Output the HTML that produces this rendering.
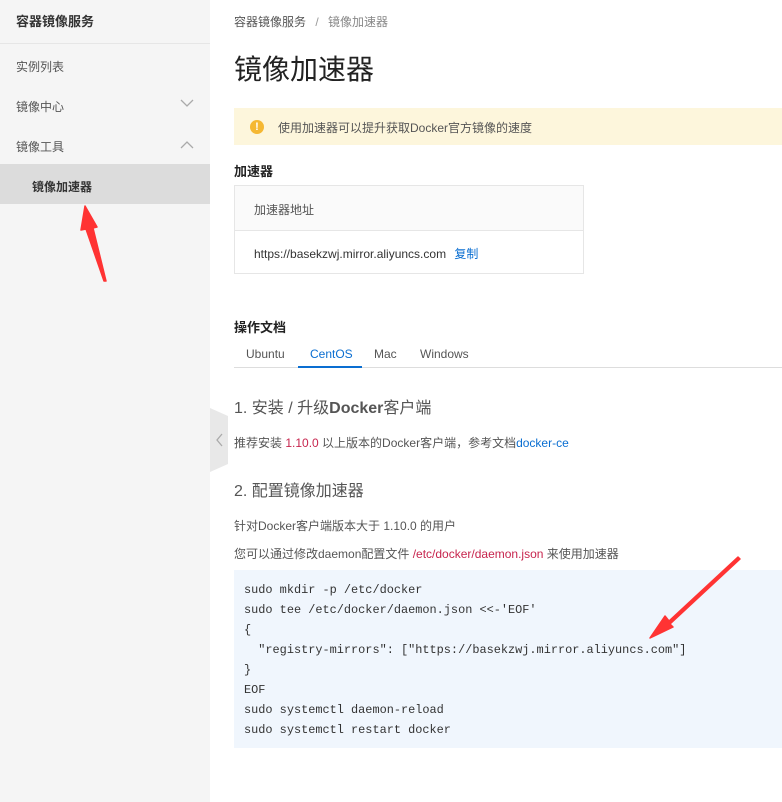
<!DOCTYPE html>
<html><head><meta charset="utf-8"><style>
*{margin:0;padding:0;box-sizing:border-box}
body{width:782px;height:802px;position:relative;overflow:hidden;background:#fff;font-family:"Liberation Sans","Noto Sans CJK SC",sans-serif;font-size:12px;color:#333}
.a{position:absolute;white-space:nowrap}
.side{position:absolute;left:0;top:0;width:210px;height:802px;background:#f5f5f5}
.mono{font-family:"Liberation Mono","DejaVu Sans Mono",monospace;font-size:11.9px;color:#333}
</style></head><body>
<div class="side">
<div class="a" style="left:16px;top:11px;font-size:13px;font-weight:bold;color:#333">容器镜像服务</div>
<div style="position:absolute;left:0;top:43px;width:210px;height:1px;background:#e6e6e6"></div>
<div class="a" style="left:16px;top:58px;color:#555">实例列表</div>
<div class="a" style="left:16px;top:98px;color:#555">镜像中心</div>
<svg class="a" style="left:180px;top:99px" width="14" height="9"><path d="M1 1L7 7L13 1" fill="none" stroke="#aaa" stroke-width="1.3"/></svg>
<div class="a" style="left:16px;top:138px;color:#555">镜像工具</div>
<svg class="a" style="left:180px;top:140px" width="14" height="9"><path d="M1 8L7 2L13 8" fill="none" stroke="#aaa" stroke-width="1.3"/></svg>
<div style="position:absolute;left:0;top:164px;width:210px;height:40px;background:#dcdcdc"></div>
<div class="a" style="left:32px;top:178px;font-weight:bold;color:#333">镜像加速器</div>
</div>
<svg class="a" style="left:210px;top:408px" width="20" height="64"><path d="M0 0L18 8L18 56L0 64Z" fill="#e8e8e8"/><path d="M12 26L7 32L12 38" fill="none" stroke="#aaa" stroke-width="1.3"/></svg>

<div class="a" style="left:234px;top:13px;color:#555">容器镜像服务 <span style="color:#999;margin:0 6px">/</span> <span style="color:#888">镜像加速器</span></div>
<div class="a" style="left:234px;top:48px;font-size:28px;color:#222">镜像加速器</div>
<div style="position:absolute;left:234px;top:108px;width:548px;height:37px;background:#fdf6dc"></div>
<div class="a" style="left:250px;top:120px;width:14px;height:14px;border-radius:7px;background:#f5b833;color:#fff;font-size:11px;font-weight:bold;text-align:center;line-height:14px">!</div>
<div class="a" style="left:278px;top:119px;color:#555">使用加速器可以提升获取Docker官方镜像的速度</div>
<div class="a" style="left:234px;top:161px;font-size:13px;font-weight:bold;color:#222">加速器</div>
<div style="position:absolute;left:234px;top:185px;width:350px;height:89px;border:1px solid #e6e6e6"></div>
<div style="position:absolute;left:235px;top:186px;width:348px;height:45px;background:#fafafa;border-bottom:1px solid #e6e6e6"></div>
<div class="a" style="left:254px;top:201px;color:#555">加速器地址</div>
<div class="a" style="left:254px;top:245px;color:#333">https://basekzwj.mirror.aliyuncs.com <span style="color:#0a6ed1;margin-left:5px">复制</span></div>

<div class="a" style="left:234px;top:317px;font-size:13px;font-weight:bold;color:#222">操作文档</div>
<div style="position:absolute;left:234px;top:367px;width:548px;height:1px;background:#ddd"></div>
<div class="a" style="left:246px;top:347px;color:#555">Ubuntu</div>
<div class="a" style="left:310px;top:347px;color:#0a6ed1">CentOS</div>
<div style="position:absolute;left:298px;top:366px;width:64px;height:2px;background:#0a6ed1"></div>
<div class="a" style="left:374px;top:347px;color:#555">Mac</div>
<div class="a" style="left:420px;top:347px;color:#555">Windows</div>

<div class="a" style="left:234px;top:394px;font-size:16px;color:#555">1. 安装 / 升级<b>Docker</b>客户端</div>
<div class="a" style="left:234px;top:434px;color:#555">推荐安装 <span style="color:#c7254e">1.10.0</span> 以上版本的Docker客户端，参考文档<span style="color:#0a6ed1">docker-ce</span></div>
<div class="a" style="left:234px;top:477px;font-size:16px;color:#555">2. 配置镜像加速器</div>
<div class="a" style="left:234px;top:517px;color:#555">针对Docker客户端版本大于 1.10.0 的用户</div>
<div class="a" style="left:234px;top:545px;color:#555">您可以通过修改daemon配置文件 <span style="color:#c7254e">/etc/docker/daemon.json</span> 来使用加速器</div>
<div style="position:absolute;left:234px;top:570px;width:548px;height:178px;background:#f0f6fd"></div>
<pre class="mono" style="position:absolute;left:244px;top:580px;line-height:20px;white-space:pre">sudo mkdir -p /etc/docker
sudo tee /etc/docker/daemon.json &lt;&lt;-'EOF'
{
  "registry-mirrors": ["https://basekzwj.mirror.aliyuncs.com"]
}
EOF
sudo systemctl daemon-reload
sudo systemctl restart docker</pre>
<svg class="a" style="left:0;top:0" width="782" height="802"><path d="M106 281L93 228L97 227L85 206L81 230L86 229L104 281Z" fill="#f33" stroke="#f33" stroke-width="1.5" stroke-linejoin="round"/><path d="M738 557L669 621L665 616L650 638L673 627L670 624L740 559Z" fill="#f33" stroke="#f33" stroke-width="1.5" stroke-linejoin="round"/></svg>
</body></html>
